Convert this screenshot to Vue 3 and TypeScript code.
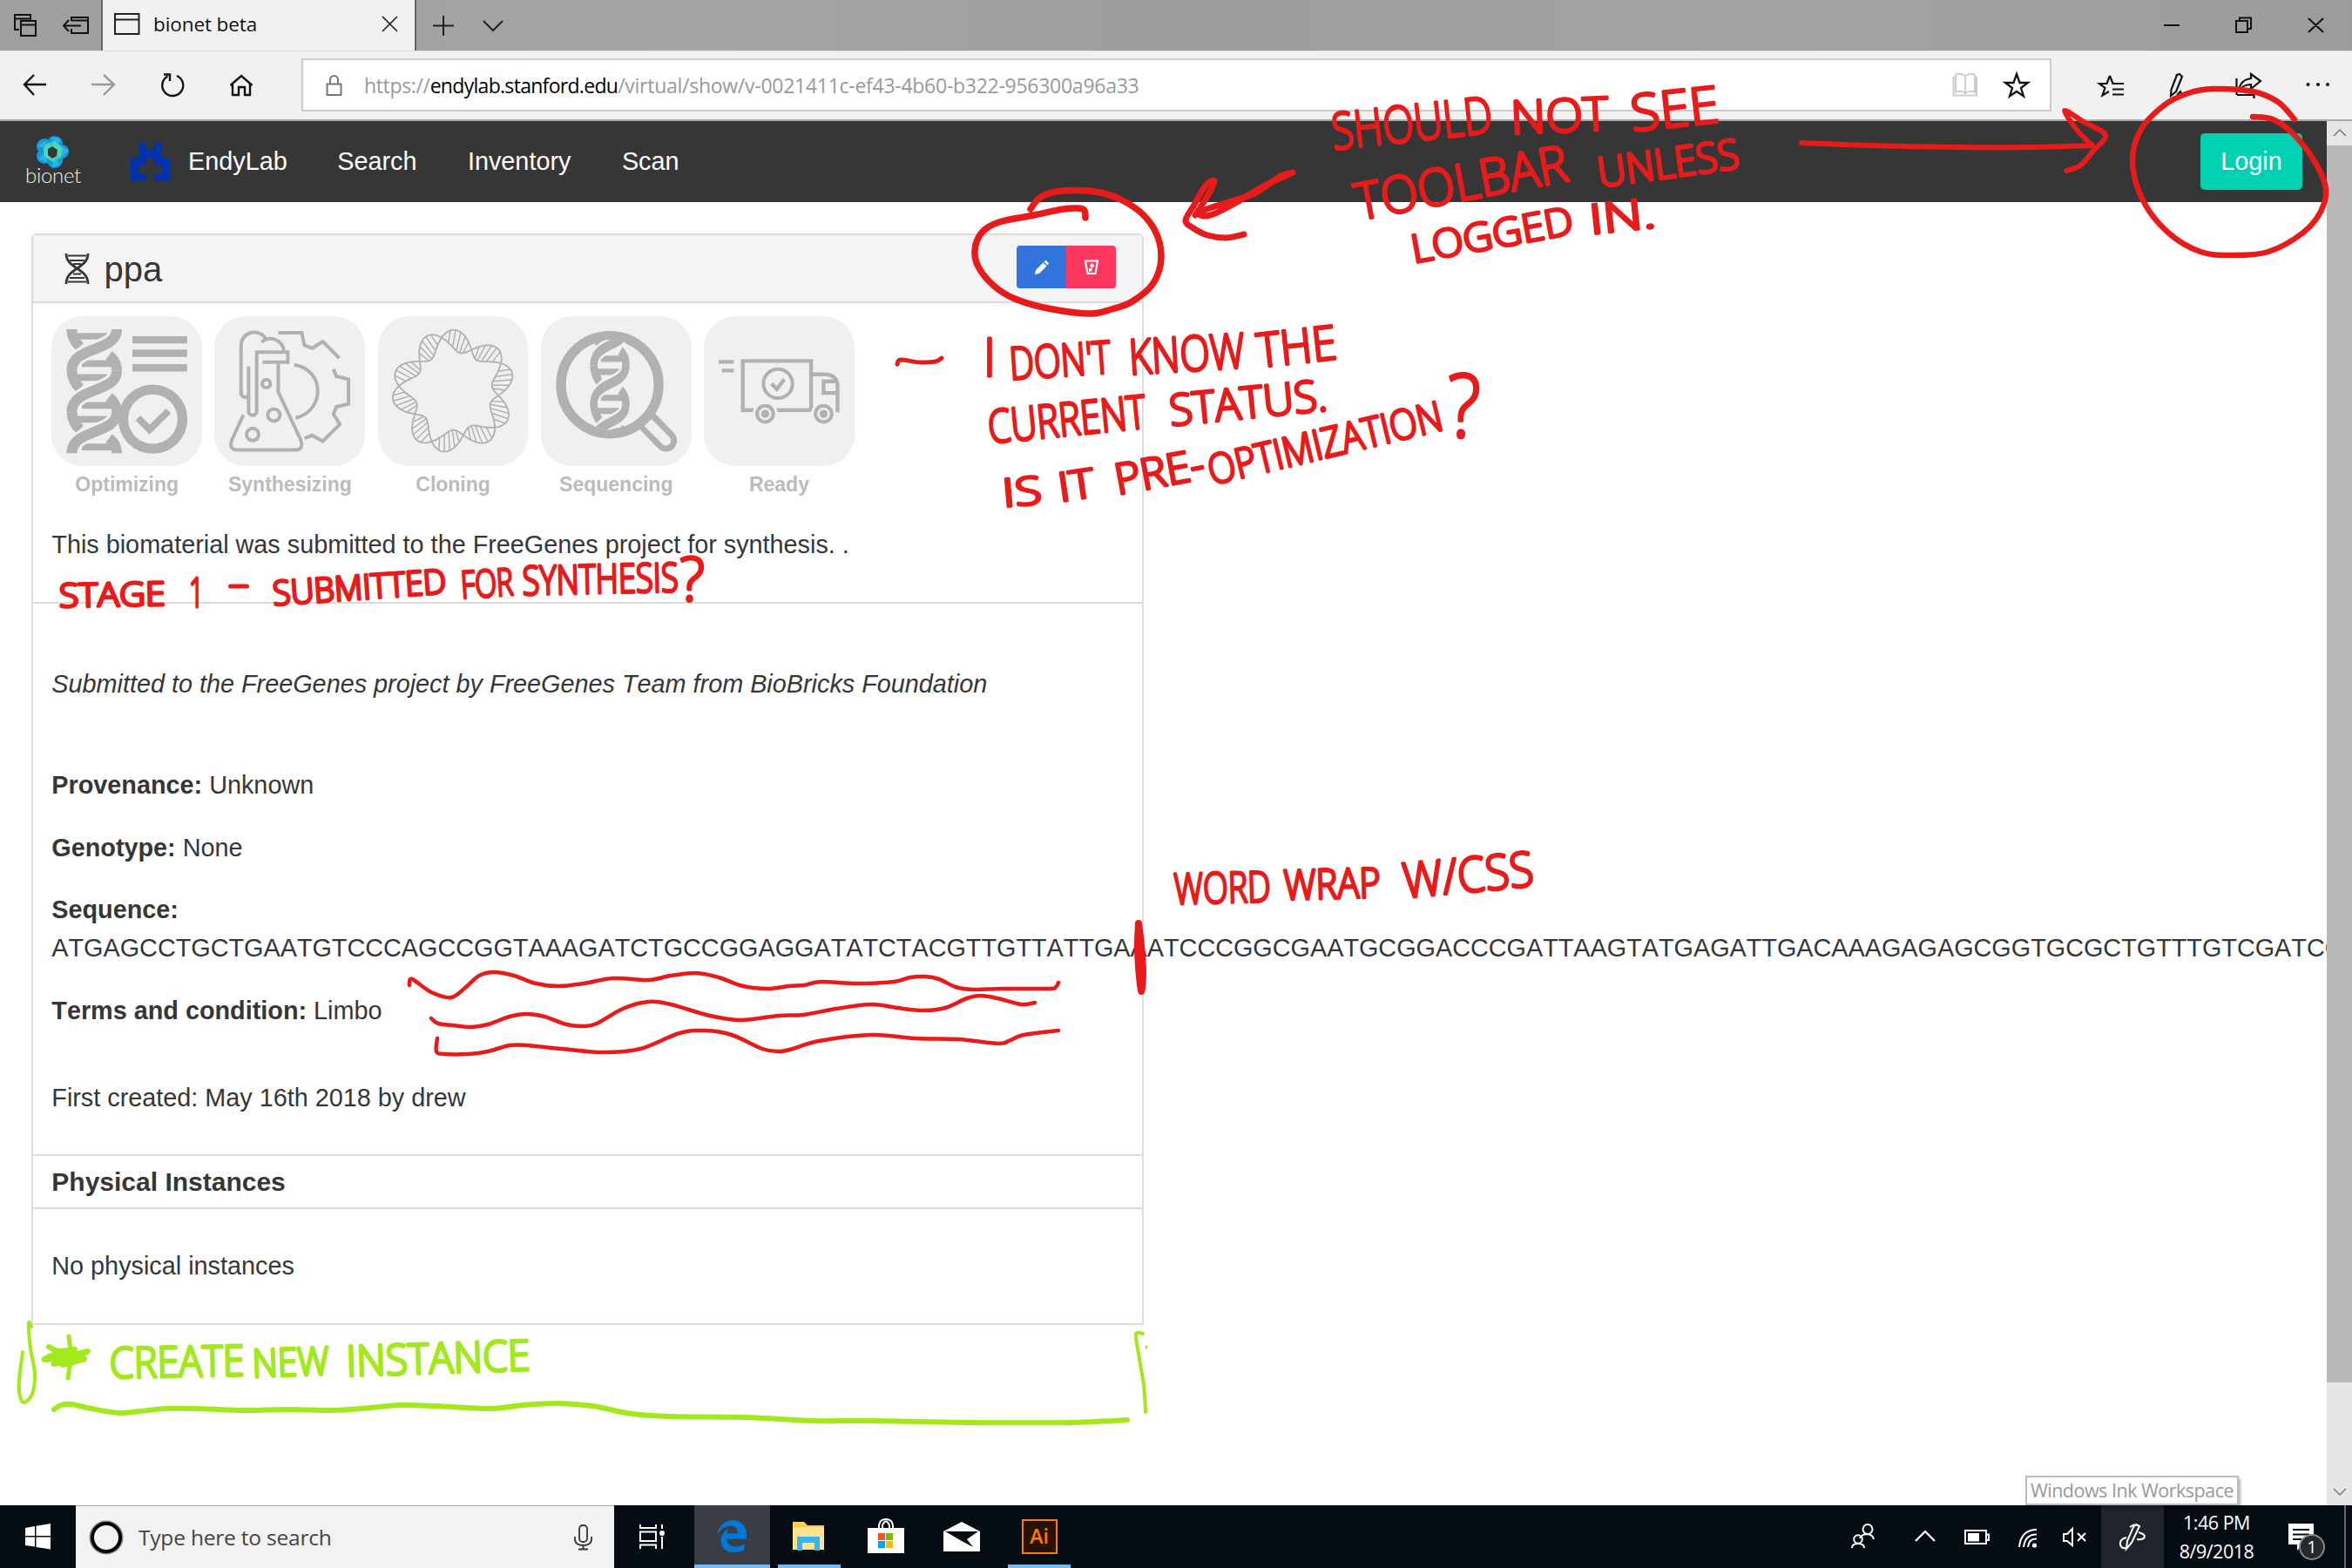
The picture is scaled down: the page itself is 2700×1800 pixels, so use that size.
<script setup lang="ts">
type Pt = [number, number]

interface Stroke { pts: Pt[]; width: number; color: string }
interface InkWord { text: string; from: Pt; to: Pt; cap: number; color: string }

const RED = '#e81a1a'
const GREEN = '#a3e81a'

/* Smooth curve through a list of points (Catmull-Rom to Bezier). */
function smooth(pts: Pt[], closed = false): string {
  const n = pts.length
  const at = (i: number): Pt => closed ? pts[(i + n) % n] : pts[Math.max(0, Math.min(n - 1, i))]
  let d = `M${pts[0][0]},${pts[0][1]}`
  const last = closed ? n : n - 1
  for (let i = 0; i < last; i++) {
    const [a, b, c, e] = [at(i - 1), at(i), at(i + 1), at(i + 2)]
    const p = [b[0] + (c[0] - a[0]) / 6, b[1] + (c[1] - a[1]) / 6, c[0] - (e[0] - b[0]) / 6, c[1] - (e[1] - b[1]) / 6, c[0], c[1]]
    d += `C${p.map(v => v.toFixed(1)).join(' ')}`
  }
  return d
}

const strokes: Stroke[] = [
  { color: RED, width: 7.5, pts: [[1183, 240], [1195, 226], [1221, 219], [1267, 222], [1302, 238], [1325, 263], [1333, 295], [1324, 325], [1300, 346], [1276, 355], [1250, 360], [1203, 354], [1165, 343], [1142, 329], [1124, 308], [1119, 288], [1127, 267], [1147, 255], [1187, 247], [1221, 240], [1243, 240], [1246, 250]] },
  { color: RED, width: 7, pts: [[1484, 198], [1470, 202], [1440, 222], [1410, 232], [1378, 243], [1381, 248], [1395, 245], [1420, 232], [1450, 214], [1484, 198]] },
  { color: RED, width: 7, pts: [[1372, 247], [1385, 227], [1394, 208], [1384, 213], [1371, 235], [1361, 253], [1370, 262], [1386, 270], [1408, 273], [1428, 269]] },
  { color: RED, width: 6, pts: [[2068, 164], [2144, 167], [2248, 169], [2330, 169], [2402, 167]] },
  { color: RED, width: 6, pts: [[2402, 167], [2385, 150], [2370, 127], [2392, 140], [2417, 155], [2403, 173], [2388, 190], [2372, 196]] },
  { color: RED, width: 6.5, pts: [[2634, 137], [2615, 117], [2586, 105], [2540, 102], [2512, 107], [2484, 121], [2457, 150], [2448, 187], [2460, 230], [2489, 267], [2526, 289], [2563, 293], [2604, 289], [2644, 267], [2664, 243], [2670, 217], [2658, 187], [2632, 153], [2609, 137], [2586, 134]] },
  { color: RED, width: 5, pts: [[1030, 418], [1034, 413], [1056, 416], [1074, 415], [1081, 411]] },
  { color: RED, width: 4.5, pts: [[470, 1131], [473, 1124], [495, 1139], [518, 1145], [535, 1133], [550, 1120], [567, 1116], [590, 1120], [615, 1129], [641, 1132], [670, 1129], [704, 1123], [744, 1125], [770, 1120], [799, 1117], [825, 1122], [853, 1132], [882, 1135], [905, 1132], [923, 1131], [942, 1127], [985, 1129], [1026, 1127], [1045, 1122], [1062, 1121], [1078, 1124], [1097, 1133], [1117, 1136], [1150, 1135], [1204, 1135], [1212, 1133], [1215, 1128]] },
  { color: RED, width: 4.5, pts: [[495, 1169], [503, 1175], [520, 1177], [541, 1179], [560, 1176], [585, 1167], [604, 1164], [625, 1167], [650, 1176], [670, 1178], [685, 1175], [715, 1158], [744, 1150], [770, 1153], [815, 1166], [851, 1171], [894, 1166], [922, 1165], [960, 1158], [1000, 1153], [1030, 1157], [1060, 1160], [1085, 1157], [1110, 1146], [1126, 1143], [1145, 1146], [1172, 1153], [1188, 1151]] },
  { color: RED, width: 4.5, pts: [[502, 1192], [501, 1207], [510, 1210], [538, 1210], [560, 1207], [585, 1200], [605, 1200], [645, 1204], [693, 1208], [735, 1204], [780, 1186], [810, 1183], [840, 1188], [875, 1204], [894, 1207], [910, 1204], [940, 1195], [1000, 1188], [1050, 1192], [1100, 1193], [1146, 1198], [1160, 1194], [1175, 1188], [1215, 1183]] },
  { color: RED, width: 8, pts: [[1307, 1060], [1306, 1085], [1307, 1110], [1310, 1138], [1312, 1115], [1310, 1085], [1307, 1060]] },
  { color: GREEN, width: 4, pts: [[36, 1523], [33, 1519], [35, 1548], [40, 1577], [37, 1600], [28, 1610], [23, 1603], [22, 1585], [26, 1552]] },
  { color: GREEN, width: 4, pts: [[1315, 1621], [1313, 1590], [1308, 1560], [1304, 1532], [1312, 1531]] },
  { color: GREEN, width: 3, pts: [[1316, 1546], [1316, 1547]] },
  { color: GREEN, width: 6, pts: [[62, 1618], [70, 1613], [82, 1612], [105, 1617], [137, 1622], [160, 1620], [190, 1617], [222, 1617], [280, 1619], [330, 1618], [385, 1619], [425, 1616], [460, 1613], [500, 1614], [564, 1617], [600, 1613], [641, 1611], [680, 1614], [725, 1623], [770, 1626], [855, 1627], [932, 1631], [1000, 1631], [1111, 1633], [1230, 1633], [1294, 1630]] },
  /* scribbled star */
  { color: GREEN, width: 5, pts: [[79, 1534], [81, 1558], [78, 1582]] },
  { color: GREEN, width: 6, pts: [[56, 1546], [67, 1551], [86, 1549], [62, 1555], [51, 1561], [78, 1557], [101, 1551], [80, 1561], [62, 1566], [97, 1560], [72, 1567]] },
]

const words: InkWord[] = [
  { text: 'SHOULD', from: [1531, 172], to: [1715, 152], cap: 42, color: RED },
  { text: 'NOT', from: [1735, 154], to: [1847, 149], cap: 38, color: RED },
  { text: 'SEE', from: [1874, 151], to: [1975, 140], cap: 42, color: RED },
  { text: 'TOOLBAR', from: [1560, 253], to: [1803, 207], cap: 42, color: RED },
  { text: 'UNLESS', from: [1836, 215], to: [1998, 193], cap: 34, color: RED },
  { text: 'LOGGED', from: [1623, 302], to: [1808, 268], cap: 32, color: RED },
  { text: 'IN.', from: [1826, 269], to: [1902, 261], cap: 34, color: RED },
  { text: 'I', from: [1129, 432], to: [1143, 432], cap: 43, color: RED },
  { text: "DON'T", from: [1160, 436], to: [1276, 428], cap: 37, color: RED },
  { text: 'KNOW', from: [1297, 430], to: [1430, 422], cap: 40, color: RED },
  { text: 'THE', from: [1445, 422], to: [1536, 412], cap: 39, color: RED },
  { text: 'CURRENT', from: [1136, 509], to: [1317, 491], cap: 38, color: RED },
  { text: 'STATUS.', from: [1344, 489], to: [1525, 471], cap: 36, color: RED },
  { text: 'IS', from: [1152, 582], to: [1197, 578], cap: 32, color: RED },
  { text: 'IT', from: [1217, 576], to: [1258, 570], cap: 33, color: RED },
  { text: 'PRE-', from: [1283, 568], to: [1385, 549], cap: 35, color: RED },
  { text: 'OPTIMIZATION', from: [1391, 557], to: [1659, 493], cap: 34, color: RED },
  { text: '?', from: [1662, 502], to: [1700, 502], cap: 72, color: RED },
  { text: 'STAGE', from: [68, 697], to: [190, 695], cap: 27, color: RED },
  { text: '1', from: [217, 697], to: [234, 697], cap: 34, color: RED },
  { text: '-', from: [262, 685], to: [286, 685], cap: 30, color: RED },
  { text: 'SUBMITTED', from: [314, 695], to: [513, 681], cap: 28, color: RED },
  { text: 'FOR', from: [530, 687], to: [590, 683], cap: 31, color: RED },
  { text: 'SYNTHESIS', from: [600, 683], to: [779, 679], cap: 33, color: RED },
  { text: '?', from: [780, 690], to: [809, 690], cap: 50, color: RED },
  { text: 'WORD', from: [1348, 1038], to: [1459, 1035], cap: 35, color: RED },
  { text: 'WRAP', from: [1474, 1033], to: [1585, 1030], cap: 34, color: RED },
  { text: 'W/CSS', from: [1612, 1031], to: [1762, 1017], cap: 40, color: RED },
  { text: 'CREATE', from: [126, 1582], to: [281, 1579], cap: 35, color: GREEN },
  { text: 'NEW', from: [290, 1581], to: [378, 1578], cap: 32, color: GREEN },
  { text: 'INSTANCE', from: [398, 1580], to: [609, 1573], cap: 35, color: GREEN },
]

const CAP_RATIO = 0.714
function wordBox(w: InkWord) {
  const dx = w.to[0] - w.from[0]
  const dy = w.to[1] - w.from[1]
  return {
    transform: `translate(${w.from[0]} ${w.from[1]}) rotate(${(Math.atan2(dy, dx) * 180 / Math.PI).toFixed(2)})`,
    length: Math.hypot(dx, dy).toFixed(1),
    size: (w.cap / CAP_RATIO).toFixed(1),
  }
}

/* Plasmid ring: two strands woven round a five-lobed centre line. */
function ringPoint(deg: number, side: number): Pt {
  const k = 5 * (deg + 102.6) * Math.PI / 180
  const r = 172 + 17 * Math.cos(k) + side * 35 * Math.sin(k)
  const t = deg * Math.PI / 180
  return [260 + r * Math.cos(t), 258 + r * Math.sin(t)]
}
const ringStrand = (side: number) => smooth(Array.from({ length: 90 }, (_, i) => ringPoint(i * 4, side)), true)
const ringA = ringStrand(1)
const ringB = ringStrand(-1)
const rungs = Array.from({ length: 10 }).flatMap((_, lobe) =>
  [8, 13, 18, 23, 28].map(o => {
    const base = -102.6 + lobe * 36 + o
    const a = ringPoint(base + 1.5, 1)
    const b = ringPoint(base - 1.5, -1)
    return `M${a[0].toFixed(1)},${a[1].toFixed(1)}L${b[0].toFixed(1)},${b[1].toFixed(1)}`
  })).join('')

const stages = ['Optimizing', 'Synthesizing', 'Cloning', 'Sequencing', 'Ready']
const navLinks = ['Search', 'Inventory', 'Scan']
const sequence = 'ATGAGCCTGCTGAATGTCCCAGCCGGTAAAGATCTGCCGGAGGATATCTACGTTGTTATTGAAATCCCGGCGAATGCGGACCCGATTAAGTATGAGATTGACAAAGAGAGCGGTGCGCTGTTTGTCGATCG'
</script>

<template>
  <div class="screen">
    <svg width="0" height="0" class="defs">
      <defs>
        <g id="helix" fill="none">
          <g stroke="#b1b1b1" stroke-width="23">
            <path d="M85 69H192M105 163H207M87 211H192M105 307H207M87 355H192M105 450H207" />
          </g>
          <g stroke="#b1b1b1" stroke-width="36">
            <path d="M70 45Q70 78 98 106M70 187Q72 222 98 248M70 330Q72 364 98 390" />
            <path d="M198 135Q225 155 225 187M198 279Q225 300 225 330M198 420Q225 440 225 472" />
          </g>
          <g id="fronts" stroke="#f0f0f0" stroke-width="54">
            <path d="M225 45C225 125 70 100 70 187M225 187C225 267 70 242 70 330M225 330C225 410 70 385 70 472" stroke-dasharray="150 300" stroke-dashoffset="-28" />
          </g>
          <path stroke="#b1b1b1" stroke-width="36" d="M225 45C225 125 70 100 70 187M225 187C225 267 70 242 70 330M225 330C225 410 70 385 70 472" />
        </g>
      </defs>
    </svg>

    <header class="tabstrip">
      <svg class="strip-left" width="116" height="58" fill="none" stroke="#111" stroke-width="2">
        <path d="M22 34H17V17H35V23M17 21.500H35M24 26V24H41V41H24ZM24 28.500H41" />
        <path d="M82 24V20H101V38H82V33M82 23.500H101M73 29.500H93M79 23L73 29.500L79 36" />
      </svg>
      <div class="tab">
        <svg width="30" height="26" fill="none" stroke="#222" stroke-width="2"><path d="M1 1H28.500V24H1ZM1 7.500H28.500" /></svg>
        <span class="tab-title">bionet beta</span>
        <svg class="tab-close" width="20" height="20" stroke="#222" stroke-width="1.700"><path d="M1 1L18 18M18 1L1 18" /></svg>
      </div>
      <svg class="strip-add" width="110" height="58" fill="none" stroke="#222" stroke-width="2"><path d="M19 29.500H43M31 18V41M77 24L88 35L99 24" /></svg>
      <svg class="win" width="230" height="58" fill="none" stroke="#111" stroke-width="2">
        <path d="M14 29H32M97 24H110V37H97ZM101 24V20.500H114V33H110M180 21L197 37M197 21L180 37" />
      </svg>
    </header>

    <div class="toolbar">
      <svg class="tools-left" width="346" height="80" fill="none" stroke="#111" stroke-width="2.400">
        <path d="M28 39H53M39 28L28 39L39 51" />
        <path stroke="#999" d="M105 39H131M119 28L131 39L119 51" />
        <path d="M192.500 29.500A12 12 0 1 0 203 29M188 27.500H195V35" />
        <path d="M264.500 40L277 29L289.500 40M267 38V51H274V42H281V51H287V38" />
      </svg>
      <div class="address">
        <svg class="lock" width="20" height="26" fill="none" stroke="#777" stroke-width="2"><path d="M1.500 11.500H17.500V24H1.500ZM5 11.500V6.500A4.500 4.500 0 0 1 14 6.500V11.500" /></svg>
        <span class="url"><span class="u1">https://</span><b class="u2">endylab.stanford.edu</b><span class="u3">/virtual/show/v-0021411c-ef43-4b60-b322-956300a96a33</span></span>
        <svg class="addr-icons" width="92" height="34" fill="none" stroke-width="2">
          <path stroke="#ccc" d="M15 6Q8 2 4 5V25Q10 22 15 26Q20 22 26 25V5Q22 2 15 6V26M4 8H1.500V28.500H28V8H26" />
          <path stroke="#111" stroke-width="2.300" d="M74 4L77.500 14H87L79 20L82 29.500L74 24L66 29.500L69 20L61 14H70.500Z" />
        </svg>
      </div>
      <svg class="tools-right" width="300" height="80" fill="none" stroke="#111" stroke-width="2.200">
        <path d="M22 29L25.500 38H38M22 29L18.500 38H10L16.500 43L13.500 51.500L21 47M25 44.500H38M25 50.500H38" />
        <path d="M102 27L105 30L98 47L92 52L92.500 45L99 28ZM99 51L103 47L105 51" />
        <path d="M167.500 32V51M187.500 49V55M184 27L195 35L184 44V39Q174 39 170 47Q171 34 184 32ZM168 51H187" />
        <g fill="#111" stroke="none"><circle cx="249.500" cy="39" r="2" /><circle cx="261" cy="39" r="2" /><circle cx="272" cy="39" r="2" /></g>
      </svg>
    </div>

    <div class="viewport">
      <main class="page">
        <nav class="navbar">
          <div class="brand">
            <svg width="40" height="38" viewBox="0 0 40 38">
              <g fill="#1398dd"><circle cx="22" cy="9" r="9" /><circle cx="10" cy="12" r="9" /><circle cx="30" cy="18" r="8" /><circle cx="10" cy="23" r="9" /><circle cx="22" cy="28" r="9" /></g>
              <g fill="#23b4e4"><path d="M17 1L29 3L25 12ZM2 11L12 5L12 15ZM2 26L11 20L14 31ZM18 37L28 33L22 24ZM30 12L38 17L30 25Z" /></g>
              <path fill="#4fd8ae" d="M12 9L22 6L31 14L29 25L20 30L10 24L9 15Z" /><path fill="#35c7cf" d="M12 9L22 6L18 12ZM29 25L20 30L24 23Z" />
              <path fill="#363636" d="M19 12L25 16L24 23L19 26L14 22L14 15Z" />
            </svg>
            <span class="brand-name">bionet</span>
          </div>
          <svg class="lab-icon" width="45" height="45" viewBox="0 0 5 5" fill="#0033b0" shape-rendering="crispEdges">
            <path d="M1 0H2V1H3V0H4V2H5V5H3V4H4V3H1V4H2V5H0V2H1ZM2 2V3H3V2Z" fill-rule="evenodd" />
          </svg>
          <a class="nav-lab">EndyLab</a>
          <a v-for="l in navLinks" :key="l" class="nav-link">{{ l }}</a>
          <button class="login">Login</button>
        </nav>

        <section class="card">
          <header class="card-head">
            <svg width="29" height="35" viewBox="0 0 29 35" fill="none" stroke="#363636" stroke-width="2.800">
              <path d="M2 0C2 18 27 16 27 35M27 0C27 18 2 16 2 35" /><path stroke-width="2" d="M4 2.500H25M6 8H23M10 12H19M10 23.500H19M6 28H23M4 32.500H25" />
            </svg>
            <h1>ppa</h1>
            <div class="actions">
              <span class="edit"><svg width="18" height="18" viewBox="0 0 18 18" fill="#fff"><path d="M1 17L2 12L10.500 3.500L14.500 7.500L6 16ZM11.500 2.500L13.500 .8L17 4.300L15.500 6.500Z" /></svg></span>
              <span class="remove"><svg width="18" height="18" viewBox="0 0 18 18"><path fill="none" stroke="#fff" stroke-width="2.200" d="M2 1.500H16L13.500 16H4.500Z" /><path fill="#fff" d="M9.500 4L12.500 7L9.500 10L7 7ZM6 10H9.500V13.500H6Z" /></svg></span>
            </div>
          </header>

          <div class="status">
            <div class="stages">
              <figure v-for="(s, i) in stages" :key="s" class="stage">
                <div class="tile">
                  <svg v-if="i === 0" viewBox="0 0 518 518">
                    <clipPath id="c0"><rect x="40" y="45" width="215" height="427" /></clipPath>
                    <g clip-path="url(#c0)"><use href="#helix" /></g>
                    <path d="M279 81.500H467M279 127.500H467M279 177.500H467" stroke="#b1b1b1" stroke-width="25" />
                    <circle cx="349" cy="354" r="102" fill="#f0f0f0" stroke="#b1b1b1" stroke-width="34" />
                    <path d="M298 350L338 390L403 326" fill="none" stroke="#b1b1b1" stroke-width="24" />
                  </svg>
                  <svg v-else-if="i === 1" viewBox="740 68 518 518" fill="none" stroke="#b1b1b1" stroke-width="12">
                    <path d="M960 125H1041L1050 168L1077 178L1113 155L1170 212M1150 250L1160 275L1202 285V370L1160 380L1150 405L1172 440L1113 498L1077 478L1051 488" />
                    <path d="M1015 235C1122 252 1122 394 1020 418" />
                    <path d="M858 346Q832 350 832 330V172C832 115 900 110 917 147M903 157C930 135 975 145 980 190" />
                    <path d="M906 226H993V192H886V395A14 14 0 0 1 858 395V240M960 232V328L1036 490Q1050 528 1018 528H820Q788 528 801 492L840 408" />
                    <circle cx="919" cy="300" r="14" /><circle cx="945" cy="408" r="21" /><circle cx="872" cy="475" r="21" />
                  </svg>
                  <svg v-else-if="i === 2" viewBox="0 0 518 518" fill="none" stroke="#b1b1b1" stroke-width="5.500">
                    <path :d="ringA" /><path :d="ringB" /><path :d="rungs" stroke-width="4.500" />
                  </svg>
                  <svg v-else-if="i === 3" viewBox="0 0 518 518">
                    <path d="M360 355L430 428" stroke="#b1b1b1" stroke-width="76" stroke-linecap="round" />
                    <path d="M362 360L430 428" stroke="#f0f0f0" stroke-width="34" stroke-linecap="round" />
                    <circle cx="237" cy="236" r="168" fill="#f0f0f0" stroke="#b1b1b1" stroke-width="34" />
                    <clipPath id="c3"><circle cx="237" cy="236" r="155" /></clipPath>
                    <g clip-path="url(#c3)"><use href="#helix" transform="translate(131.500 -6) scale(.715 .935)" /></g>
                  </svg>
                  <svg v-else viewBox="925 68 518 518" fill="none" stroke="#b1b1b1" stroke-width="13">
                    <path d="M976 225H1028M987 255H1028M1059 222H1294V391H1059ZM1294 268H1345Q1385 272 1385 310V392H1370M1385 292H1337V332H1385" />
                    <circle cx="1180" cy="300" r="50" stroke-width="12" />
                    <path d="M1158 300L1176 319L1202 285" />
                    <g v-for="x in [1136, 1337]" :key="x">
                      <circle :cx="x" cy="404" r="43" fill="#f0f0f0" stroke="none" />
                      <circle :cx="x" cy="404" r="28" stroke-width="12" /><circle :cx="x" cy="404" r="14" fill="#b1b1b1" stroke="none" />
                    </g>
                  </svg>
                </div>
                <figcaption>{{ s }}</figcaption>
              </figure>
            </div>
            <p class="status-text">This biomaterial was submitted to the FreeGenes project for synthesis. .</p>
          </div>

          <div class="details">
            <p class="origin"><em>Submitted to the FreeGenes project by FreeGenes Team from BioBricks Foundation</em></p>
            <p class="row"><strong>Provenance:</strong> Unknown</p>
            <p class="row"><strong>Genotype:</strong> None</p>
            <p class="row"><strong>Sequence:</strong><br><span class="seq">{{ sequence }}</span></p>
            <p class="row"><strong>Terms and condition:</strong> Limbo</p>
            <p class="created">First created: May 16th 2018 by drew</p>
          </div>
          <h2 class="sub">Physical Instances</h2>
          <p class="none">No physical instances</p>
        </section>
      </main>
      <aside class="scrollbar">
        <span class="sb-btn"><svg width="16" height="12" fill="none" stroke="#777" stroke-width="1.500"><path d="M1 9L8 2L15 9" /></svg></span>
        <span class="sb-thumb"></span>
        <span class="sb-rest"><svg width="16" height="12" fill="none" stroke="#777" stroke-width="1.500"><path d="M1 2L8 9L15 2" /></svg></span>
      </aside>
    </div>

    <footer class="taskbar">
      <div class="start"><svg width="30" height="30" fill="#fff"><path d="M0 5L11 3V14H0ZM12.500 2.700L29 0V14H12.500ZM0 15.500H11V26.500L0 25ZM12.500 15.500H29V29.500L12.500 27Z" /></svg></div>
      <div class="search">
        <svg width="40" height="40" fill="none"><circle cx="20" cy="20" r="17" stroke="#888" stroke-width="5" /><circle cx="20" cy="20" r="16" stroke="#000" stroke-width="4" /></svg>
        <span>Type here to search</span>
        <svg class="mic" width="22" height="30" fill="none" stroke="#333" stroke-width="1.800"><rect x="7" y="1" width="9" height="19" rx="4" /><path d="M2 14V18Q3 24 11.500 24Q20 24 21 18V14M11.500 24V28M6 28.500H17" /></svg>
      </div>
      <div class="app view"><svg width="32" height="30" fill="none" stroke="#fff" stroke-width="2"><path d="M3 1V5H21V1M3 9.500H21V20H3ZM3 29V24.500H21V29M28 1V6M28 15V29" /><circle cx="28" cy="11" r="2" fill="#fff" /></svg></div>
      <div class="app active lit">
        <svg width="36" height="38" viewBox="0 0 38 40"><path fill="#0078d7" d="M1 18C4 5 12 0 20 0C31 0 37 8 37 18V23H13C13 29 18 32 24 32Q30 32 34.500 29V36Q29 39 22 39C12 39 6 33 6 25C6 18 10 13 16 10Q13 13 13 16H26C26 11 24 7 18 7C11 7 5 11 1 18Z" /></svg>
      </div>
      <div class="app lit folder"><svg width="40" height="36"><path fill="#f7c948" d="M1 1H14L18 5H37V12H1Z" /><path fill="#ffe38f" d="M1 7H37V33H1Z" /><path fill="#ffd33d" d="M1 1H14L17 6H1Z" /><path fill="#3cb4e7" d="M6 18H32V34H26V25H12V34H6Z" /></svg></div>
      <div class="app"><svg width="44" height="44"><path fill="none" stroke="#fff" stroke-width="2" d="M14 13V9Q15 2 22 2Q29 2 30 9V13M18 13V9Q22 0 26 9V13" /><path fill="#fff" d="M1 12H43V41H1Z" /><path fill="#f25022" d="M13 18H21V26H13Z" /><path fill="#7fba00" d="M22 18H30V26H22Z" /><path fill="#00a4ef" d="M13 27H21V35H13Z" /><path fill="#ffb900" d="M22 27H30V35H22Z" /></svg></div>
      <div class="app"><svg width="44" height="36"><path fill="#fff" d="M1 12L22 1L43 12V35H1Z" /><path fill="#060c14" d="M3 12H41L28 21L35 30L22 23Z" /></svg></div>
      <div class="app lit ai"><span>Ai</span></div>
      <div class="tray">
        <svg class="tray-icons" width="290" height="72" fill="none" stroke="#fff" stroke-width="2">
          <circle cx="26" cy="27.500" r="5.500" /><path d="M17 38Q19 33 26 33Q32 34 33 39" /><circle cx="15" cy="39" r="4.800" /><path d="M8 49Q8 44 15 44Q22 44 22 49" />
          <path d="M81 41L92 30L103 41" stroke-width="2.200" />
          <path d="M138 29H162V44H138ZM163 33.500H165V40H163" /><path fill="#fff" stroke="none" d="M141 32H154V41.500H141Z" />
          <path d="M200 48Q202 28 220 28M205 48Q207 33 220 33.500M210 48Q211 38 220 38.500" /><circle cx="217.500" cy="46" r="2.600" fill="#fff" stroke="none" />
          <path d="M251 33H255L261 27V46L255 41H251ZM267 32L276 41M276 32L267 41" />
        </svg>
        <div class="pen"><svg width="34" height="34" fill="none" stroke="#fff" stroke-width="2"><path d="M21 3L25 5L16 24L10 31L11 22L18 6ZM14 6L19 3M10 18Q2 20 3 26Q4 31 10 30M24 12Q31 14 31 17Q30 21 22 20" /></svg></div>
        <div class="clock"><span>1:46 PM</span><span>8/9/2018</span></div>
        <div class="notify">
          <svg width="30" height="34"><path fill="#fff" d="M0 0H29V24H16L10 31V24H0Z" /><path stroke="#060c14" stroke-width="2" d="M5 7H24M5 12.500H24M5 18H15" /></svg>
          <span class="count">1</span>
        </div>
      </div>
    </footer>

    <div class="tooltip">Windows Ink Workspace</div>

    <svg class="ink" width="2700" height="1800" fill="none" stroke-linecap="round" stroke-linejoin="round">
      <path v-for="(s, i) in strokes" :key="'s' + i" :d="smooth(s.pts)" :stroke="s.color" :stroke-width="s.width" />
      <text
        v-for="(w, i) in words" :key="'w' + i" class="hand"
        :transform="wordBox(w).transform" :font-size="wordBox(w).size"
        :textLength="wordBox(w).length" lengthAdjust="spacingAndGlyphs"
        :fill="w.color" :stroke="w.color"
      >{{ w.text }}</text>
    </svg>
  </div>
</template>

<style>
html, body { margin: 0; background: #fff; overflow: hidden; }
</style>

<style scoped>
.screen { position: relative; width: 2700px; height: 1800px; display: flex; flex-direction: column; overflow: hidden; background: #fff; color: #363636; font: 28.8px/43.2px "Liberation Sans", Arial, sans-serif; font-kerning: none; }
.defs { position: absolute; }
svg { display: block; flex: none; }

.tabstrip { height: 58px; flex: none; display: flex; background: linear-gradient(90deg, #a09f9e, #a5a5a5 30%, #9d9d9d 50%, #a1a3a2 75%, #9c9c9c); box-sizing: border-box; }
.tab { width: 362px; box-sizing: border-box; background: #f1f1f1; border: solid #666; border-width: 0 2px; display: flex; align-items: center; padding: 0 18px 2px 13px; }
.tab-title { margin-left: 15px; font: 22.500px/30px "Open Sans", "Noto Sans", sans-serif; color: #111; letter-spacing: -.1px; }
.tab-close { margin-left: auto; }
.win { margin-left: auto; }

.toolbar { height: 80.500px; flex: none; display: flex; box-sizing: border-box; background: #f1f1f1; border-top: 1px solid #ddd; border-bottom: 2px solid #aaa; }
.tools-left, .tools-right { margin-top: -1px; }
.tools-right { margin-left: auto; }
.address { width: 2009px; height: 61px; margin-top: 8px; box-sizing: border-box; border: 2px solid #ccc; background: #fff; display: flex; align-items: center; padding-left: 26px; }
.url { margin-left: 24px; font: 23px/40px "Open Sans", "Noto Sans", sans-serif; color: #999; white-space: nowrap; }
.url b { font-weight: 400; color: #000; }
.u1 { letter-spacing: -.35px; }
.u2 { letter-spacing: -.7px; }
.u3 { letter-spacing: -.27px; }
.addr-icons { margin-left: auto; margin-right: 20px; }

.viewport { height: 1589.500px; flex: none; display: flex; overflow: hidden; }
.page { width: 2671px; height: 100%; overflow: hidden; }
.navbar { height: 93.500px; background: #363636; display: flex; align-items: center; box-sizing: border-box; padding: 0 28px 0 29px; color: #fff; }
.brand { width: 64px; display: flex; flex-direction: column; align-items: center; height: 72px; margin-top: 14px; }
.brand-name { font: 24px/20px "Lato", sans-serif; font-weight: 300; letter-spacing: -.3px; margin-top: -3px; color: #eee; }
.lab-icon { margin-left: 57px; }
.nav-lab { margin-left: 21px; margin-right: 28.500px; }
.nav-link { margin: 0 29.500px 0 29px; }
.login { margin-left: auto; width: 117px; height: 65px; border: 0; border-radius: 5px; background: #00d1b2; color: #fff; font: inherit; padding: 0; }

.card { width: 1277px; height: 1253px; margin: 36px 0 0 36px; box-sizing: border-box; border: 2px solid #dbdbdb; border-radius: 6px 6px 0 0; }
.card-head { height: 78px; box-sizing: border-box; background: #f4f4f4; border-bottom: 2px solid #dbdbdb; display: flex; align-items: center; padding: 0 30px 0 36px; }
.card-head h1 { margin: 2px 0 0 16.500px; font-size: 40px; line-height: 50px; font-weight: 400; }
.actions { margin-left: auto; margin-bottom: 3px; display: flex; }
.actions span { width: 57px; height: 49px; display: flex; align-items: center; justify-content: center; }
.edit { background: #3273dc; border-radius: 4px 0 0 4px; }
.remove { background: #ff3860; border-radius: 0 4px 4px 0; }

.status { height: 344.500px; box-sizing: border-box; border-bottom: 2px solid #dbdbdb; padding: 14.500px 21.300px 0; }
.stages { display: flex; gap: 14.400px; }
.stage { margin: 0; width: 172.800px; text-align: center; }
.tile { width: 172.800px; height: 172.800px; border-radius: 36px; background: #f0f0f0; }
.tile svg { width: 100%; height: 100%; }
figcaption { margin-top: 4px; font-weight: 700; font-size: 23px; line-height: 34.600px; color: #bbb; }
.status-text { margin: 30px 0 0; }
p { margin: 0; white-space: nowrap; }
.details { height: 634.500px; box-sizing: border-box; padding: 71.500px 21.300px 0; border-bottom: 2px solid #dbdbdb; }
.origin { margin-bottom: 72.500px; }
.row { margin-bottom: 28.700px; }
.created { margin-top: 57.500px; }
.sub { margin: 0; height: 61px; box-sizing: border-box; border-bottom: 2px solid #dbdbdb; padding-left: 21.300px; font-size: 30px; line-height: 60px; }
.none { padding: 43.500px 21.300px 0; }

.scrollbar { width: 29px; display: flex; flex-direction: column; background: #b9b9b9; }
.scrollbar span { display: flex; justify-content: center; }
.sb-btn { height: 28px; align-items: center; background: #e6e6e6; }
.sb-thumb { height: 1420px; }
.sb-rest { flex: 1; background: #e6e6e6; align-items: flex-end; padding-bottom: 9px; }

.taskbar { height: 72px; flex: none; background: #060c14; display: flex; font-family: "Open Sans", "Noto Sans", sans-serif; }
.start { width: 87px; display: flex; align-items: center; justify-content: center; }
.search { width: 618px; box-sizing: border-box; background: #f2f2f2; border-top: 1px solid #aaa; display: flex; align-items: center; padding: 0 25px 0 15px; color: #444; font-size: 24.500px; letter-spacing: -.2px; }
.search span { margin-left: 17px; }
.mic { margin-left: auto; }
.app { width: 87.500px; display: flex; align-items: center; justify-content: center; box-sizing: border-box; }
.app.view { width: 91.500px; padding-right: 6px; }
.app.active { background: #3a3e44; }
.lit { border-bottom: 4px solid #76b9ed; padding-top: 4px; }
.app.folder, .app.ai { width: 72px; margin: 0 8.500px; }
.app.ai { margin-left: 9px; }
.ai span { width: 41px; height: 40px; box-sizing: border-box; border: 2px solid #ff7c00; background: #261300; color: #ff7c00; font-size: 23px; font-weight: 600; line-height: 34px; text-align: center; }
.tray { margin-left: auto; display: flex; align-items: center; color: #fff; }
.tray-icons { margin-right: 4px; }
.pen { width: 72px; height: 72px; background: #20252c; display: flex; align-items: center; justify-content: center; }
.clock { width: 121px; display: flex; flex-direction: column; text-align: center; font-size: 21.500px; line-height: 33px; letter-spacing: -.5px; }
.notify { width: 88px; height: 72px; box-sizing: border-box; border-right: 2px solid #666; margin-right: 7px; padding: 21px 0 0 22px; position: relative; }
.count { position: absolute; left: 34px; top: 33px; width: 30px; height: 30px; box-sizing: border-box; border-radius: 50%; border: 2px solid #888; background: #26292d; text-align: center; font-size: 20px; line-height: 26px; }

.tooltip { position: absolute; left: 2325px; top: 1694px; width: 245px; height: 34px; box-sizing: border-box; border: 2px solid #bbb; background: #fff; color: #999; font: 21.500px/30px "Open Sans", "Noto Sans", sans-serif; text-align: center; white-space: nowrap; letter-spacing: -.5px; box-shadow: 2px 3px 3px rgba(0,0,0,.3); }
.ink { position: absolute; left: 0; top: 0; pointer-events: none; }
.hand { font-family: "Open Sans", "Noto Sans", sans-serif; font-weight: 300; stroke-width: 3.200px; }
</style>
